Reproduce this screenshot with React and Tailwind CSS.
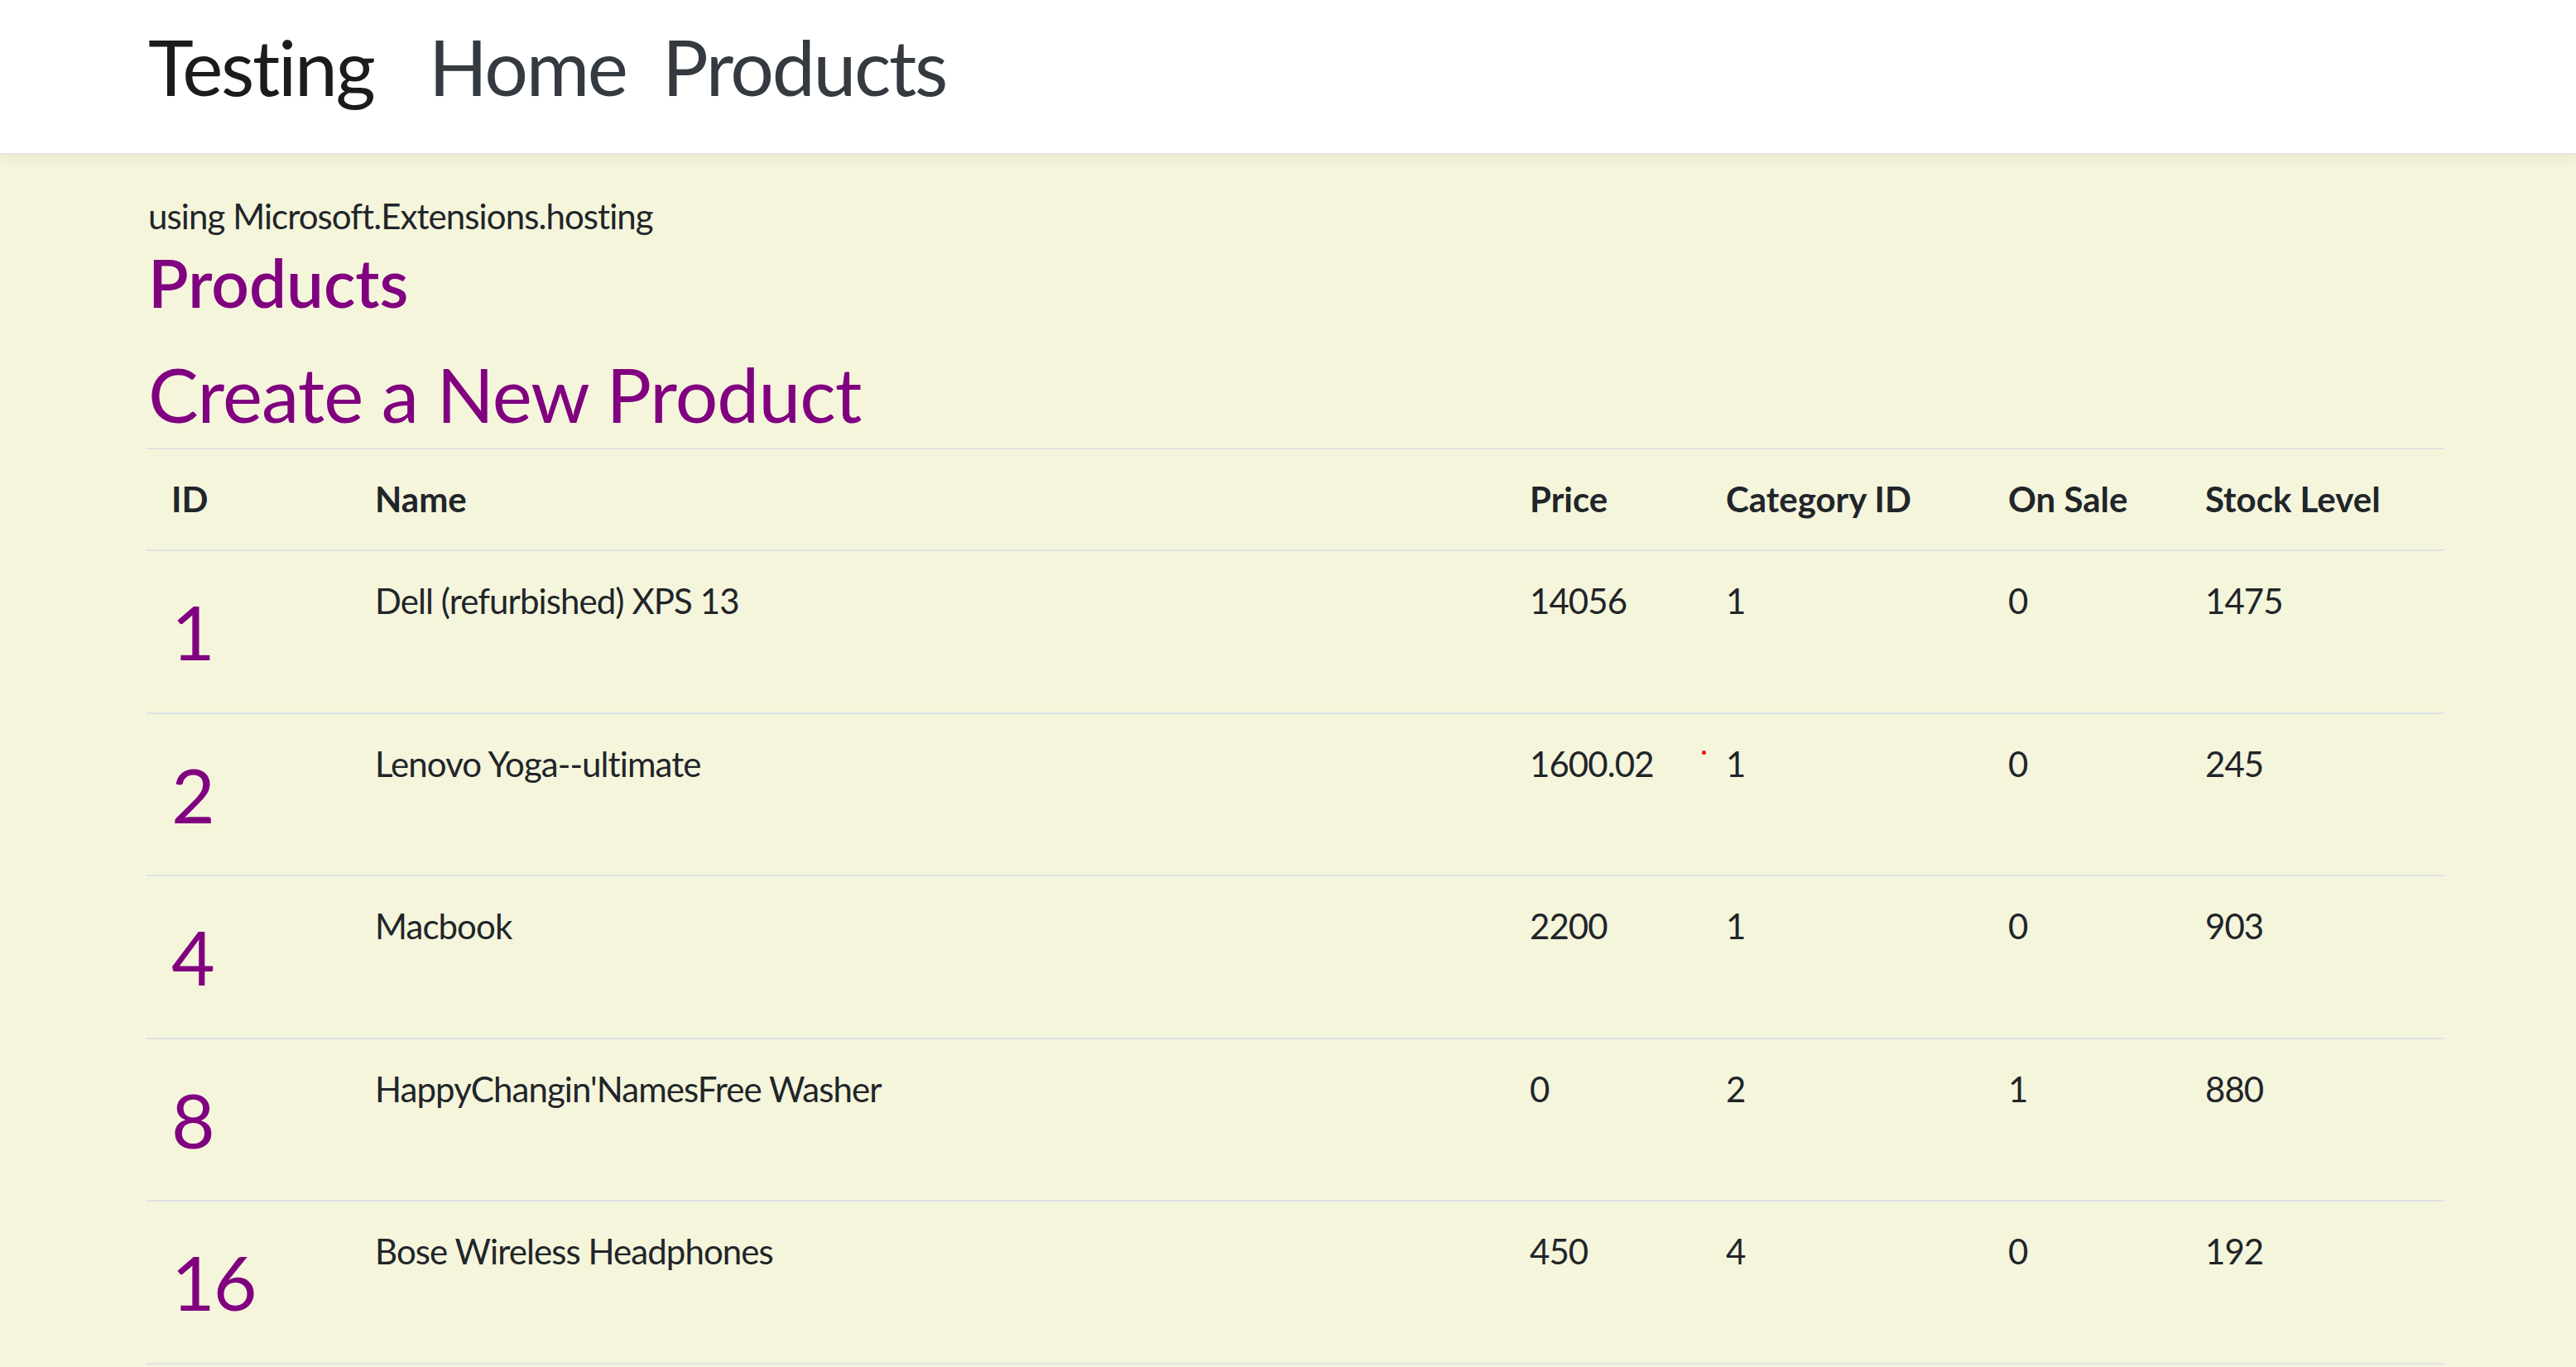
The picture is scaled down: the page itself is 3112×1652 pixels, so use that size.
import React from "react";

const products = [
  { id: 1, name: "Dell (refurbished) XPS 13", price: "14056", category: 1, onSale: 0, stock: 1475 },
  { id: 2, name: "Lenovo Yoga--ultimate", price: "1600.02", category: 1, onSale: 0, stock: 245, dot: true },
  { id: 4, name: "Macbook", price: "2200", category: 1, onSale: 0, stock: 903 },
  { id: 8, name: "HappyChangin'NamesFree Washer", price: "0", category: 2, onSale: 1, stock: 880 },
  { id: 16, name: "Bose Wireless Headphones", price: "450", category: 4, onSale: 0, stock: 192 },
];

const th = "px-[30px] py-[29px] text-left align-top font-bold";
const td = "px-[30px] py-[29px] align-top tracking-[-0.022em]";

const App = () => {
  return (
    <div className="min-h-screen bg-[#f5f5dc] font-['Segoe_UI','Lato',sans-serif] text-[#212529]">
      <nav className="h-[187px] bg-white border-b-2 border-[#e5e5e5] shadow-[0_6px_18px_rgba(0,0,0,0.05)]">
        <div className="flex pl-[179px] pt-[25px] text-[93px] leading-[1.2] tracking-[-0.025em]">
          <a className="w-[339px] text-[#1b1b1b]">Testing</a>
          <a className="w-[282px] text-[#343a40]">Home</a>
          <a className="text-[#343a40]">Products</a>
        </div>
      </nav>

      <main className="ml-[177px] w-[2776px] pt-[43px]">
        <p className="pl-[2px] text-[42px] leading-[1.5] tracking-[-0.022em]">using Microsoft.Extensions.hosting</p>
        <h1 className="pl-[2px] text-[80px] font-semibold leading-[1.2] text-[#800080]">Products</h1>
        <h2 className="mt-[32px] pl-[2px] text-[91px] leading-[1.2] tracking-[-0.01em] text-[#800080]">
          Create a New Product
        </h2>

        <table className="mt-[11px] w-full table-fixed border-collapse text-[42px] leading-[1.5]">
          <thead>
            <tr className="border-y-2 border-[#dee2e6]">
              <th className={`${th} w-[246px]`}>ID</th>
              <th className={`${th} w-[1395px]`}>Name</th>
              <th className={`${th} w-[237px]`}>Price</th>
              <th className={`${th} w-[341px]`}>Category ID</th>
              <th className={`${th} w-[238px]`}>On Sale</th>
              <th className={th}>Stock Level</th>
            </tr>
          </thead>
          <tbody>
            {products.map((p) => (
              <tr key={p.id} className="border-b-2 border-[#dee2e6]">
                <td className={`${td} text-[91px] text-[#800080]`}>{p.id}</td>
                <td className={td}>{p.name}</td>
                <td className={td}>{p.price}</td>
                <td className={`${td} relative`}>
                  {p.dot && (
                    <span className="absolute left-[1px] top-[44px] h-[5px] w-[5px] rounded-full bg-[#e8141c]" />
                  )}
                  {p.category}
                </td>
                <td className={td}>{p.onSale}</td>
                <td className={td}>{p.stock}</td>
              </tr>
            ))}
          </tbody>
        </table>
      </main>
    </div>
  );
};

export default App;
